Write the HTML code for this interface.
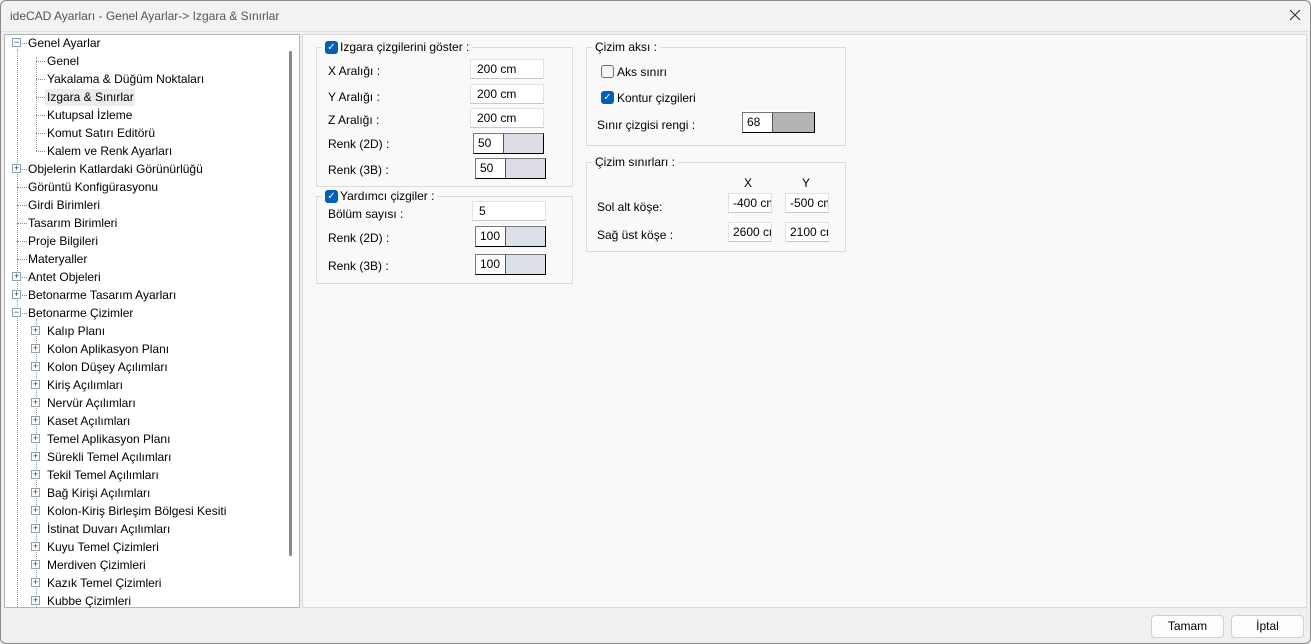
<!DOCTYPE html>
<html><head><meta charset="utf-8"><style>
*{box-sizing:border-box;margin:0;padding:0}
body{width:1311px;height:644px;background:#f0f0f0;font-family:"Liberation Sans",sans-serif;font-size:12px;color:#000;position:relative;overflow:hidden}
.a{position:absolute;white-space:nowrap}
#title{left:0;top:0;width:1311px;height:32px;background:#f3f3f3;border-bottom:1px solid #e0e0e0}
#tree{left:4px;top:34px;width:296px;height:574px;background:#fff;border:1px solid #b4b4b4;overflow:hidden}
#right{left:302px;top:34px;width:1005px;height:574px;background:#f9f9f9;border:1px solid #dcdcdc}
.row{position:absolute;height:18px;line-height:18px;font-size:12px;white-space:nowrap}
.d{position:absolute;height:1px;border-top:1px dotted #888}
.box{position:absolute;width:9px;height:9px;border:1px solid #8e9fb8;background:#fff;font-size:9px;line-height:7px;text-align:center;color:#1f3a7a}
.g{position:absolute;border:1px solid #dcdcdc}
.gl{position:absolute;background:#f9f9f9;padding:0 3px;line-height:14px;white-space:nowrap}
.in{position:absolute;background:#fff;border:1px solid #e2e2e2;border-bottom-color:#c8c8c8;height:20px;line-height:18px;padding-left:6px;white-space:nowrap}
.col{position:absolute;height:21px;border:1px solid #777;border-right-color:#000;border-bottom-color:#000;background:#fff;box-shadow:-1px -1px 0 #fff}
.col span{position:absolute;left:0;top:0;width:30px;height:19px;line-height:18px;padding-left:4px;border-right:1px solid #555}
.col i{position:absolute;left:30px;right:0;top:0;bottom:0}
.cb{position:absolute;width:13px;height:13px;border-radius:3px;background:#005fb8;color:#fff;font-size:10px;line-height:13px;text-align:center}
.cbe{position:absolute;width:13px;height:13px;border-radius:3px;border:1px solid #6d6d6d;background:#f6f6f6}
.btn{position:absolute;height:23px;border:1px solid #d0d0d0;border-radius:4px;background:#fdfdfd;text-align:center;line-height:21px}
</style></head><body>
<div class="a" id="title"><div class="a" style="left:10px;top:9px;color:#555;font-size:12px">ideCAD Ayarları - Genel Ayarlar-&gt; Izgara &amp; Sınırlar</div>
<svg class="a" style="left:1289px;top:9px" width="12" height="12" viewBox="0 0 12 12"><path d="M1 1L11 11M11 1L1 11" stroke="#333" stroke-width="1.1"/></svg></div>

<div class="a" id="tree">
<div class="a" style="left:12px;top:14px;height:560px;border-left:1px dotted #999"></div>
<div class="a" style="left:31px;top:22px;height:94px;border-left:1px dotted #999"></div>
<div class="a" style="left:31px;top:284px;height:290px;border-left:1px dotted #999"></div>
<div class="a" style="left:284px;top:16px;width:3px;height:505px;background:#8a8a8a;border-radius:1px"></div>
</div>

<div class="a" style="left:4px;top:34px">
<div class="box" style="left:8px;top:4px;line-height:6px">−</div><div class="d" style="left:18px;top:9px;width:5px"></div><div class="row" style="left:24px;top:0">Genel Ayarlar</div>
<div class="d" style="left:32px;top:27px;width:9px"></div><div class="row" style="left:43px;top:18px">Genel</div>
<div class="d" style="left:32px;top:45px;width:9px"></div><div class="row" style="left:43px;top:36px">Yakalama &amp; Düğüm Noktaları</div>
<div class="a" style="left:41px;top:55px;width:90px;height:17px;background:#ececec"></div>
<div class="d" style="left:32px;top:63px;width:9px"></div><div class="row" style="left:43px;top:54px">Izgara &amp; Sınırlar</div>
<div class="d" style="left:32px;top:81px;width:9px"></div><div class="row" style="left:43px;top:72px">Kutupsal İzleme</div>
<div class="d" style="left:32px;top:99px;width:9px"></div><div class="row" style="left:43px;top:90px">Komut Satırı Editörü</div>
<div class="d" style="left:32px;top:117px;width:9px"></div><div class="row" style="left:43px;top:108px">Kalem ve Renk Ayarları</div>
<div class="box" style="left:8px;top:130px">+</div><div class="d" style="left:18px;top:135px;width:5px"></div><div class="row" style="left:24px;top:126px">Objelerin Katlardaki Görünürlüğü</div>
<div class="d" style="left:13px;top:153px;width:10px"></div><div class="row" style="left:24px;top:144px">Görüntü Konfigürasyonu</div>
<div class="d" style="left:13px;top:171px;width:10px"></div><div class="row" style="left:24px;top:162px">Girdi Birimleri</div>
<div class="d" style="left:13px;top:189px;width:10px"></div><div class="row" style="left:24px;top:180px">Tasarım Birimleri</div>
<div class="d" style="left:13px;top:207px;width:10px"></div><div class="row" style="left:24px;top:198px">Proje Bilgileri</div>
<div class="d" style="left:13px;top:225px;width:10px"></div><div class="row" style="left:24px;top:216px">Materyaller</div>
<div class="box" style="left:8px;top:238px">+</div><div class="d" style="left:18px;top:243px;width:5px"></div><div class="row" style="left:24px;top:234px">Antet Objeleri</div>
<div class="box" style="left:8px;top:256px">+</div><div class="d" style="left:18px;top:261px;width:5px"></div><div class="row" style="left:24px;top:252px">Betonarme Tasarım Ayarları</div>
<div class="box" style="left:8px;top:274px;line-height:6px">−</div><div class="d" style="left:18px;top:279px;width:5px"></div><div class="row" style="left:24px;top:270px">Betonarme Çizimler</div>
<div class="box" style="left:27px;top:292px">+</div><div class="row" style="left:43px;top:288px">Kalıp Planı</div>
<div class="box" style="left:27px;top:310px">+</div><div class="row" style="left:43px;top:306px">Kolon Aplikasyon Planı</div>
<div class="box" style="left:27px;top:328px">+</div><div class="row" style="left:43px;top:324px">Kolon Düşey Açılımları</div>
<div class="box" style="left:27px;top:346px">+</div><div class="row" style="left:43px;top:342px">Kiriş Açılımları</div>
<div class="box" style="left:27px;top:364px">+</div><div class="row" style="left:43px;top:360px">Nervür Açılımları</div>
<div class="box" style="left:27px;top:382px">+</div><div class="row" style="left:43px;top:378px">Kaset Açılımları</div>
<div class="box" style="left:27px;top:400px">+</div><div class="row" style="left:43px;top:396px">Temel Aplikasyon Planı</div>
<div class="box" style="left:27px;top:418px">+</div><div class="row" style="left:43px;top:414px">Sürekli Temel Açılımları</div>
<div class="box" style="left:27px;top:436px">+</div><div class="row" style="left:43px;top:432px">Tekil Temel Açılımları</div>
<div class="box" style="left:27px;top:454px">+</div><div class="row" style="left:43px;top:450px">Bağ Kirişi Açılımları</div>
<div class="box" style="left:27px;top:472px">+</div><div class="row" style="left:43px;top:468px">Kolon-Kiriş Birleşim Bölgesi Kesiti</div>
<div class="box" style="left:27px;top:490px">+</div><div class="row" style="left:43px;top:486px">İstinat Duvarı Açılımları</div>
<div class="box" style="left:27px;top:508px">+</div><div class="row" style="left:43px;top:504px">Kuyu Temel Çizimleri</div>
<div class="box" style="left:27px;top:526px">+</div><div class="row" style="left:43px;top:522px">Merdiven Çizimleri</div>
<div class="box" style="left:27px;top:544px">+</div><div class="row" style="left:43px;top:540px">Kazık Temel Çizimleri</div>
<div class="box" style="left:27px;top:562px">+</div><div class="row" style="left:43px;top:558px">Kubbe Çizimleri</div>
</div>

<div class="a" id="right"></div>
<div class="g" style="left:316px;top:47px;width:257px;height:140px"></div>
<div class="gl" style="left:322px;top:40px"><span style="display:inline-block;width:15px"></span>Izgara çizgilerini göster :</div>
<div class="cb" style="left:325px;top:41px">✓</div>
<div class="a" style="left:328px;top:64px">X Aralığı :</div>
<div class="in" style="left:470px;top:59px;width:74px">200 cm</div>
<div class="a" style="left:328px;top:90px">Y Aralığı :</div>
<div class="in" style="left:470px;top:84px;width:74px">200 cm</div>
<div class="a" style="left:328px;top:113px">Z Aralığı :</div>
<div class="in" style="left:470px;top:108px;width:74px">200 cm</div>
<div class="a" style="left:328px;top:137px">Renk (2D) :</div>
<div class="col" style="left:473px;top:133px;width:71px"><span>50</span><i style="background:#dcdce6"></i></div>
<div class="a" style="left:328px;top:163px">Renk (3B) :</div>
<div class="col" style="left:475px;top:158px;width:71px"><span>50</span><i style="background:#dcdce6"></i></div>
<div class="g" style="left:316px;top:196px;width:257px;height:88px"></div>
<div class="gl" style="left:322px;top:189px"><span style="display:inline-block;width:15px"></span>Yardımcı çizgiler :</div>
<div class="cb" style="left:325px;top:190px">✓</div>
<div class="a" style="left:328px;top:207px">Bölüm sayısı :</div>
<div class="in" style="left:472px;top:201px;width:74px">5</div>
<div class="a" style="left:328px;top:231px">Renk (2D) :</div>
<div class="col" style="left:475px;top:226px;width:71px"><span>100</span><i style="background:#dce0e8"></i></div>
<div class="a" style="left:328px;top:259px">Renk (3B) :</div>
<div class="col" style="left:475px;top:254px;width:71px"><span>100</span><i style="background:#dce0e8"></i></div>
<div class="g" style="left:586px;top:47px;width:260px;height:99px"></div>
<div class="gl" style="left:592px;top:40px">Çizim aksı :</div>
<div class="cbe" style="left:601px;top:65px"></div>
<div class="a" style="left:617px;top:65px">Aks sınırı</div>
<div class="cb" style="left:601px;top:91px">✓</div>
<div class="a" style="left:617px;top:91px">Kontur çizgileri</div>
<div class="a" style="left:597px;top:118px">Sınır çizgisi rengi :</div>
<div class="col" style="left:742px;top:112px;width:73px"><span>68</span><i style="background:#b4b4b4"></i></div>
<div class="g" style="left:586px;top:162px;width:260px;height:90px"></div>
<div class="gl" style="left:592px;top:155px">Çizim sınırları :</div>
<div class="a" style="left:744px;top:176px">X</div>
<div class="a" style="left:802px;top:176px">Y</div>
<div class="a" style="left:597px;top:200px">Sol alt köşe:</div>
<div class="in" style="left:728px;top:193px;width:44px;padding-left:4px;overflow:hidden">-400 cm</div>
<div class="in" style="left:785px;top:193px;width:44px;padding-left:4px;overflow:hidden">-500 cm</div>
<div class="a" style="left:597px;top:228px">Sağ üst köşe :</div>
<div class="in" style="left:728px;top:222px;width:44px;padding-left:4px;overflow:hidden">2600 cm</div>
<div class="in" style="left:785px;top:222px;width:44px;padding-left:4px;overflow:hidden">2100 cm</div>
<div class="btn" style="left:1151px;top:615px;width:73px">Tamam</div>
<div class="btn" style="left:1231px;top:615px;width:73px">İptal</div>
<div class="a" style="left:0;top:0;width:1311px;height:644px;border:1px solid #888;border-radius:6px;pointer-events:none"></div>
</body></html>
